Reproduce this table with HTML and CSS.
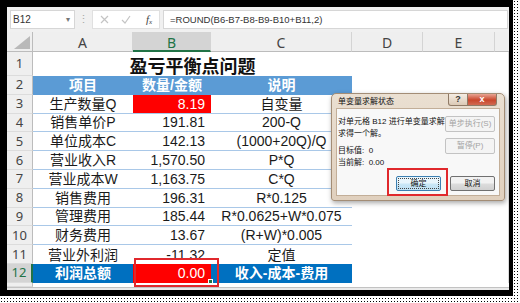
FILE: index.html
```html
<!DOCTYPE html>
<html>
<head>
<meta charset="utf-8">
<link rel="stylesheet" href="styles.css">
</head>
<body>
<div class="page">
  <div class="frame">
    <div class="app">
      <div class="fbar">
        <div class="namebox"><span>B12</span><span class="dd">▾</span></div>
        <div class="sep">⋮</div>
        <div class="fbtns">
          <svg width="9" height="9" viewBox="0 0 9 9"><path d="M1 1L8 8M8 1L1 8" stroke="#c4c4c4" stroke-width="1.2" fill="none"/></svg>
          <svg width="10" height="9" viewBox="0 0 10 9"><path d="M1 5L4 8L9 1" stroke="#c4c4c4" stroke-width="1.2" fill="none"/></svg>
          <span class="fx"><i>f</i><sub>x</sub></span>
        </div>
        <div class="formula">=ROUND(B6-B7-B8-B9-B10+B11,2)</div>
      </div>
      <div class="sheet">
        <div class="grid">
          <div class="ch corner"><svg width="16" height="13" viewBox="0 0 16 13"><polygon points="16,0 16,13 0,13" fill="#b9b9b9"/></svg></div>
          <div class="ch">A</div>
          <div class="ch sel">B</div>
          <div class="ch">C</div>
          <div class="ch">D</div>
          <div class="ch">E</div>
          <div class="ch rest"></div>

          <div class="rh">1</div>
          <div class="title">盈亏平衡点问题</div>
          <div class="c"></div><div class="c"></div><div class="c rest"></div>

          <div class="rh">2</div>
          <div class="c hdr">项目</div><div class="c hdr">数量/金额</div><div class="c hdr">说明</div>
          <div class="c"></div><div class="c"></div><div class="c rest"></div>

          <div class="rh">3</div>
          <div class="c ln">生产数量Q</div><div class="c ln num red">8.19</div><div class="c ln">自变量</div>
          <div class="c"></div><div class="c"></div><div class="c rest"></div>

          <div class="rh">4</div>
          <div class="c ln">销售单价P</div><div class="c ln num">191.81</div><div class="c ln">200-Q</div>
          <div class="c"></div><div class="c"></div><div class="c rest"></div>

          <div class="rh">5</div>
          <div class="c ln">单位成本C</div><div class="c ln num">142.13</div><div class="c ln">(1000+20Q)/Q</div>
          <div class="c"></div><div class="c"></div><div class="c rest"></div>

          <div class="rh">6</div>
          <div class="c ln">营业收入R</div><div class="c ln num">1,570.50</div><div class="c ln">P*Q</div>
          <div class="c"></div><div class="c"></div><div class="c rest"></div>

          <div class="rh">7</div>
          <div class="c ln">营业成本W</div><div class="c ln num">1,163.75</div><div class="c ln">C*Q</div>
          <div class="c"></div><div class="c"></div><div class="c rest"></div>

          <div class="rh">8</div>
          <div class="c ln">销售费用</div><div class="c ln num">196.31</div><div class="c ln">R*0.125</div>
          <div class="c"></div><div class="c"></div><div class="c rest"></div>

          <div class="rh">9</div>
          <div class="c ln">管理费用</div><div class="c ln num">185.44</div><div class="c ln">R*0.0625+W*0.075</div>
          <div class="c"></div><div class="c"></div><div class="c rest"></div>

          <div class="rh">10</div>
          <div class="c ln">财务费用</div><div class="c ln num">13.67</div><div class="c ln">(R+W)*0.005</div>
          <div class="c"></div><div class="c"></div><div class="c rest"></div>

          <div class="rh">11</div>
          <div class="c">营业外利润</div><div class="c num">-11.32</div><div class="c">定值</div>
          <div class="c"></div><div class="c"></div><div class="c rest"></div>

          <div class="rh sel">12</div>
          <div class="c tot">利润总额</div><div class="c num red b12">0.00<span class="handle"></span></div><div class="c tot">收入-成本-费用</div>
          <div class="c"></div><div class="c"></div><div class="c rest"></div>

          <div class="rh"></div>
          <div class="c fill"></div>
        </div>
      </div>
      <div class="tabs"></div>
    </div>
  </div>

  <div class="dialog">
    <div class="dlg-title">
      <span class="dlg-name">单变量求解状态</span>
      <div class="tbtns"><span class="tb help">?</span><span class="tb close">x</span></div>
    </div>
    <div class="dlg-body">
      <div class="dlg-main">
        <div class="dlg-text">
          <p>对单元格 B12 进行单变量求解</p>
          <p>求得一个解。</p>
          <p class="gap">目标值:&nbsp; 0</p>
          <p>当前解:&nbsp; 0.00</p>
        </div>
        <div class="dlg-side">
          <span class="btn dis">单步执行(S)</span>
          <span class="btn dis">暂停(P)</span>
        </div>
      </div>
      <div class="dlg-foot">
        <span class="btn ok">确定</span>
        <span class="btn">取消</span>
      </div>
    </div>
  </div>

  <div class="mark mark-b12"></div>
  <div class="mark mark-ok"></div>
</div>
</body>
</html>
```

FILE: styles.css
```css
* { box-sizing: border-box; margin: 0; padding: 0; }
html, body { width: 520px; height: 303px; overflow: hidden; }
body {
  background-color: #fff;
  background-image: radial-gradient(circle, #000 0.6px, transparent 0.9px);
  background-size: 3px 3px;
  font-family: "Liberation Sans", "Noto Sans CJK SC", sans-serif;
}
.page { position: relative; width: 520px; height: 303px; }
.frame { width: 513px; height: 296px; background: #000; padding: 7px 4px 6px 7px; }
.app { width: 502px; height: 283px; background: #fff; display: flex; flex-direction: column; }

/* formula bar */
.fbar { height: 25px; flex: none; background: #f0f0f0; display: flex; align-items: center; padding: 0 1px 0 3px; }
.namebox { width: 65px; height: 19px; background: #fff; border: 1px solid #d6d6d6; display: flex; align-items: center; justify-content: space-between; padding: 0 4px 0 2px; font-size: 10px; color: #333; }
.dd { font-size: 8px; color: #777; }
.sep { width: 17px; text-align: center; color: #a8a8a8; font-size: 11px; line-height: 1; }
.fbtns { width: 68px; height: 19px; background: #fff; border: 1px solid #e0e0e0; display: grid; grid-template-columns: 22px 22px 24px; align-items: center; justify-items: center; }
.fx { font-family: "Liberation Serif", serif; font-size: 11px; color: #444; line-height: 1; }
.fx sub { font-size: 7px; font-style: italic; vertical-align: -1px; }
.formula { flex: 1; height: 19px; margin-left: 3px; background: #fff; border: 1px solid #d6d6d6; padding-left: 6px; font-size: 9.5px; color: #333; display: flex; align-items: center; }

/* sheet */
.sheet { flex: 1; background: #fff; }
.grid { height: 100%; display: grid; grid-template-columns: 26px 100px 78px 141px 71px 72px 14px; grid-template-rows: 20px 24px repeat(11, 18.8px) 1fr; }
.ch { background: #efefef; color: #444; font-family: "Noto Sans", sans-serif; font-size: 14px; display: flex; align-items: center; justify-content: center; border-right: 1px solid #d4d4d4; border-bottom: 1px solid #bcbcbc; padding-top: 2px; }
.ch.sel { background: #d4d4d4; color: #217346; border-bottom: 2px solid #217346; }
.ch.corner { justify-content: flex-end; align-items: flex-end; padding: 0 2px 2px 0; border-right: 1px solid #bcbcbc; }
.ch.rest { border-right: none; }
.rh { background: #efefef; color: #444; font-family: "Noto Sans", sans-serif; font-size: 13px; display: flex; align-items: center; justify-content: center; border-right: 1px solid #bcbcbc; border-bottom: 1px solid #dcdcdc; line-height: 1; }
.rh.sel { background: #d4d4d4; color: #217346; border-right: 2px solid #217346; }

.c { display: flex; align-items: center; justify-content: center; font-size: 14px; color: #1a1a1a; line-height: 1; white-space: nowrap; }
.c.rest { border-right: 1px solid #dadada; }
.c.fill { grid-column: span 6; }
.title { grid-column: span 3; display: flex; align-items: center; justify-content: center; font-size: 18px; font-weight: bold; color: #111; padding-top: 2px; }
.num { justify-content: flex-end; padding-right: 6px; }
.ln { border-bottom: 1px solid #a9c8e8; }
.hdr { background: #5b9bd5; color: #fff; font-weight: bold; }
.tot { background: #0070c0; color: #fff; font-weight: bold; }
.red { background: #ff0000; color: #fff; }
.b12 { position: relative; }
.handle { position: absolute; right: -2px; bottom: -1px; width: 5px; height: 5px; background: #217346; border: 1px solid #fff; }
.tabs { height: 3px; flex: none; border-top: 1px solid #c2c2c2; background: #e9e9e9; }

/* dialog */
.dialog { position: absolute; left: 331px; top: 93px; width: 174px; height: 108px; background: linear-gradient(#eadfd1, #e0d0be); border: 1px solid #a38d76; border-radius: 5px 5px 3px 3px; padding: 0 4px 4px 4px; display: flex; flex-direction: column; box-shadow: 1px 2px 5px rgba(0,0,0,0.35); font-family: "Liberation Sans", "Noto Sans CJK SC", sans-serif; font-size: 8px; color: #111; }
.dlg-title { height: 14px; flex: none; display: flex; justify-content: space-between; align-items: flex-start; }
.dlg-name { line-height: 15px; padding-left: 2px; font-size: 8px; }
.tbtns { display: flex; margin-right: 3px; }
.tb { height: 12px; display: flex; align-items: center; justify-content: center; line-height: 1; border: 1px solid #8f7a66; border-top: none; }
.help { width: 20px; background: linear-gradient(#f4ece3, #dccab6); color: #333; font-size: 9px; font-weight: bold; border-radius: 0 0 0 3px; }
.close { width: 29px; background: linear-gradient(#e8a493, #c9462c 55%, #d06a52); color: #fff; font-size: 9px; font-weight: bold; border-left: none; border-radius: 0 0 3px 0; }
.dlg-body { flex: 1; background: #f8f8f8; border: 1px solid #c2ae98; padding: 7px 4px 4px 1px; display: flex; flex-direction: column; }
.dlg-main { display: flex; justify-content: space-between; }
.dlg-text p { line-height: 12px; font-size: 8px; white-space: nowrap; }
.dlg-text p.gap { margin-top: 5px; }
.dlg-side { display: flex; flex-direction: column; gap: 6px; }
.btn { height: 16px; display: flex; align-items: center; justify-content: center; font-size: 8px; line-height: 1; border: 1px solid #707070; border-radius: 2px; background: linear-gradient(#f2f2f2 45%, #dcdcdc 55%, #d0d0d0); color: #111; }
.dlg-side .btn { width: 50px; }
.btn.dis { color: #a3a3a3; background: #f4f4f4; border-color: #c3c3c3; }
.dlg-foot { margin-top: auto; display: flex; justify-content: flex-end; gap: 9px; }
.dlg-foot .btn { width: 45px; height: 15px; }
.btn.ok { background: linear-gradient(#e8f5fc 45%, #c9e7f7 55%, #bfe0f3); border-color: #3c7fb1; outline: 1px dotted #444; outline-offset: -3px; }

/* annotations */
.mark { position: absolute; border: 2px solid #e0282c; }
.mark-b12 { left: 134px; top: 258px; width: 85px; height: 29px; }
.mark-ok { left: 387px; top: 168px; width: 61px; height: 28px; }
```
